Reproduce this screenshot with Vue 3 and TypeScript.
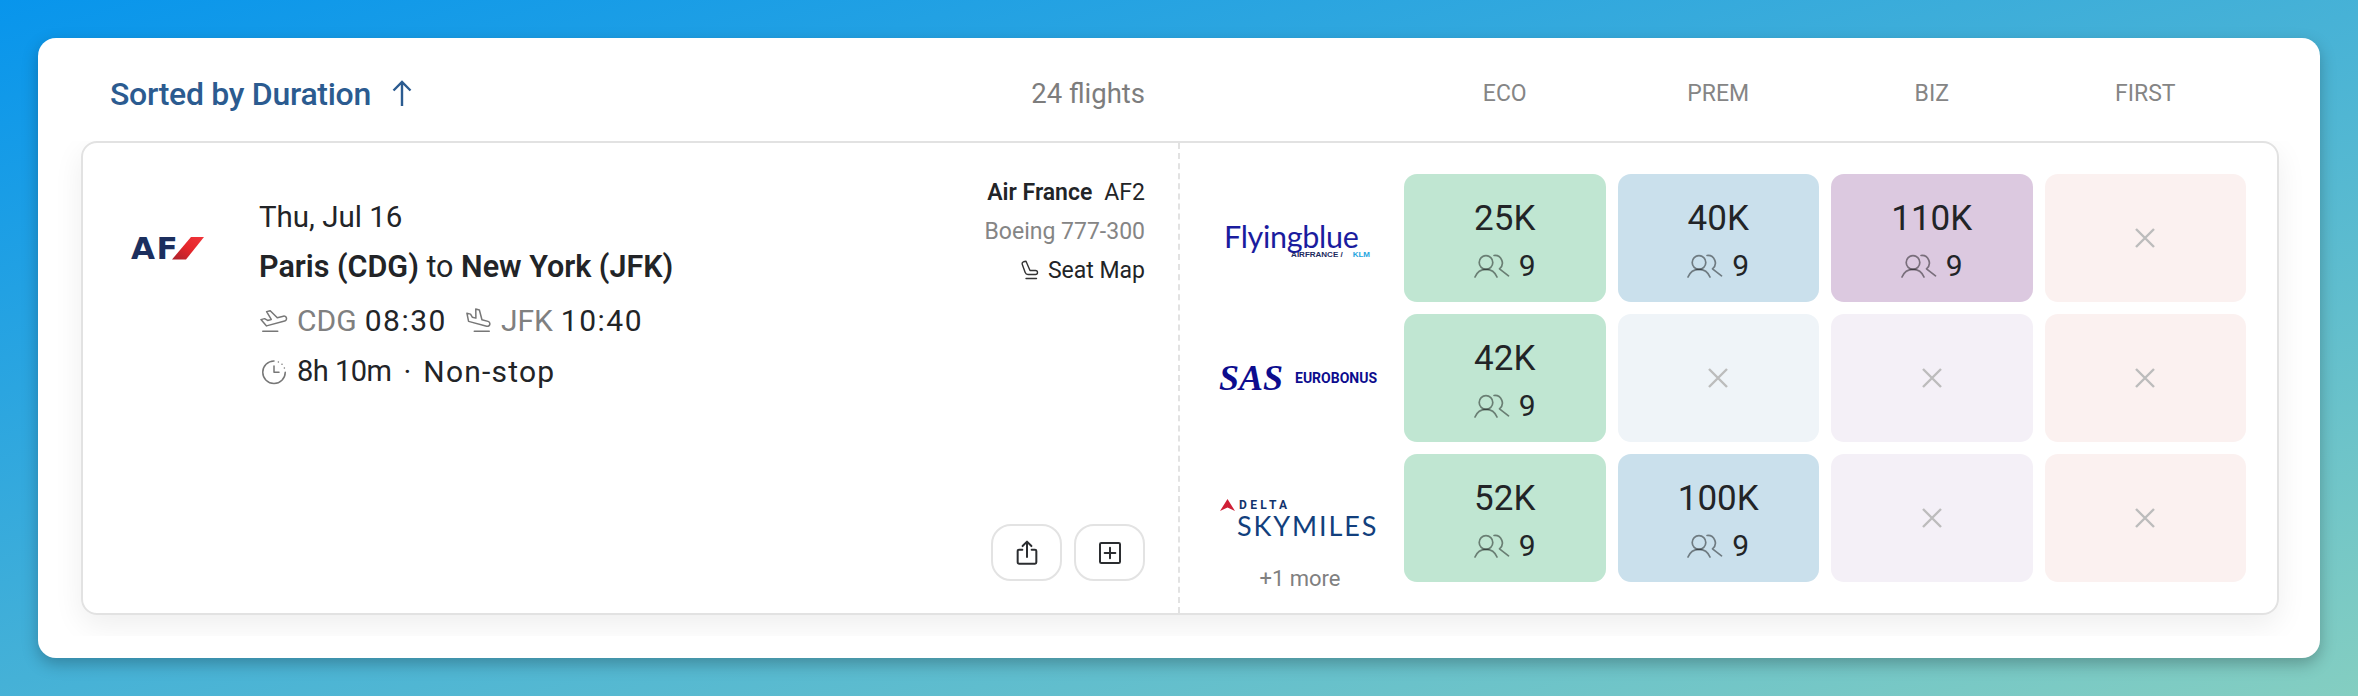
<script setup lang="ts">
type Tone = 'eco' | 'prem' | 'biz' | 'first'

interface Fare {
  tone: Tone
  miles?: string
  seats?: number
}

interface Program {
  id: 'flyingblue' | 'sas' | 'delta'
  fares: Fare[]
}

const cabins = ['ECO', 'PREM', 'BIZ', 'FIRST']

const programs: Program[] = [
  {
    id: 'flyingblue',
    fares: [
      { tone: 'eco', miles: '25K', seats: 9 },
      { tone: 'prem', miles: '40K', seats: 9 },
      { tone: 'biz', miles: '110K', seats: 9 },
      { tone: 'first' },
    ],
  },
  {
    id: 'sas',
    fares: [
      { tone: 'eco', miles: '42K', seats: 9 },
      { tone: 'prem' },
      { tone: 'biz' },
      { tone: 'first' },
    ],
  },
  {
    id: 'delta',
    fares: [
      { tone: 'eco', miles: '52K', seats: 9 },
      { tone: 'prem', miles: '100K', seats: 9 },
      { tone: 'biz' },
      { tone: 'first' },
    ],
  },
]
</script>

<template>
  <div class="page">
    <section class="panel">
      <header class="head">
        <div class="head-left">
          <button class="sort" type="button">
            <span>Sorted by Duration</span>
            <svg class="sort-arrow" width="24" height="28" viewBox="0 0 24 28" fill="none">
              <path d="M12 26V2M3.5 10.5 12 2l8.500 8.500" />
            </svg>
          </button>
          <span class="count">24 flights</span>
        </div>
        <div class="cabins">
          <span v-for="cabin in cabins" :key="cabin">{{ cabin }}</span>
        </div>
      </header>

      <div class="clip">
        <article class="card">
          <div class="info">
            <div class="airline-logo">
              <span class="af-text">AF</span>
              <svg width="32" height="23" viewBox="0 0 32 23">
                <defs>
                  <linearGradient id="af-red" x1="0" y1="1" x2="1" y2="0">
                    <stop offset="0" stop-color="#a9222c" />
                    <stop offset="0.5" stop-color="#e5262b" />
                    <stop offset="1" stop-color="#f0353a" />
                  </linearGradient>
                </defs>
                <polygon points="19,0 32,0 14,22.500 0,22.500" fill="url(#af-red)" />
              </svg>
            </div>

            <div class="trip">
              <div class="date">Thu, Jul 16</div>
              <div class="route"><b>Paris (CDG)</b> to <b>New York (JFK)</b></div>
              <div class="times">
                <svg class="ico" width="30" height="30" viewBox="0 0 24 24" fill="none">
                  <path d="M14.639 10.258l4.83-1.294a2 2 0 1 1 1.035 3.863l-14.489 3.883-4.45-5.020 2.897-.776 2.450 1.414 2.897-.776-3.743-6.244 2.898-.777 5.675 5.727" />
                  <path d="M3 21h12" />
                </svg>
                <span class="muted">CDG</span>
                <span class="clock">08:30</span>
                <svg class="ico ico-gap" width="30" height="30" viewBox="0 0 24 24" fill="none">
                  <path d="M15.157 11.810l4.830 1.295a2 2 0 1 1-1.036 3.863l-14.489-3.882-1.345-6.572 2.898.776 1.414 2.450 2.898.776-.120-7.279 2.898.777 2.052 7.797" />
                  <path d="M9 21h12" />
                </svg>
                <span class="muted">JFK</span>
                <span class="clock">10:40</span>
              </div>
              <div class="times times--last">
                <svg class="ico" width="30" height="30" viewBox="0 0 24 24" fill="none">
                  <path d="M21 13a9 9 0 1 1-9-9" />
                  <path d="M12 8v5h4" />
                  <path d="M15.500 4.700v.01M18.400 6.600v.01M20.300 9.600v.01" />
                </svg>
                <span class="length">8h 10m</span>
                <span class="dot">·</span>
                <span class="stops">Non-stop</span>
              </div>
            </div>

            <div class="side">
              <div class="flight"><b>Air France</b><span>AF2</span></div>
              <div class="plane">Boeing 777-300</div>
              <div class="seatmap">
                <svg width="20" height="20" viewBox="0 0 20 20" fill="none">
                  <path d="M3.500 1.800 6 1.200 10 10.500h5.500a2 2 0 0 1 0 4H8a3 3 0 0 1-2.800-2L2.300 4.500a2 2 0 0 1 1.200-2.700z" />
                  <path d="M6 18.500h10.500" />
                </svg>
                <span>Seat Map</span>
              </div>
              <div class="actions">
                <button class="action" type="button" aria-label="Share">
                  <svg width="32" height="32" viewBox="0 0 24 24" fill="none">
                    <path d="M8.500 9.500H6a1 1 0 0 0-1 1V19a1 1 0 0 0 1 1h12a1 1 0 0 0 1-1v-8.500a1 1 0 0 0-1-1h-2.500" />
                    <path d="M12 15V3.500M8.700 6.800 12 3.500l3.300 3.300" />
                  </svg>
                </button>
                <button class="action" type="button" aria-label="Add">
                  <svg width="32" height="32" viewBox="0 0 24 24" fill="none">
                    <rect x="4.500" y="4.500" width="15" height="15" rx="1" />
                    <path d="M12 8v8M8 12h8" />
                  </svg>
                </button>
              </div>
            </div>
          </div>

          <div class="fares">
            <template v-for="program in programs" :key="program.id">
              <div class="program">
                <div v-if="program.id === 'flyingblue'" class="fb">
                  <div class="fb-name">Flyingblue</div>
                  <div class="fb-sub"><span class="fb-af">AIRFRANCE /</span><span class="fb-klm">KLM</span></div>
                </div>
                <div v-else-if="program.id === 'sas'" class="sas">
                  <span class="sas-name">SAS</span>
                  <span class="sas-sub">EUROBONUS</span>
                </div>
                <template v-else>
                  <div class="delta">
                    <div class="delta-top">
                      <svg width="15" height="12" viewBox="0 0 15 12">
                        <polygon points="7.500,0 15,12 7.500,8.500 0,12" fill="#cf1f36" />
                      </svg>
                      <span>DELTA</span>
                    </div>
                    <div class="delta-name">SKYMILES</div>
                  </div>
                  <div class="more">+1 more</div>
                </template>
              </div>

              <div v-for="fare in program.fares" :key="fare.tone" :class="['fare', `fare--${fare.tone}`, { 'fare--none': !fare.miles }]">
                <template v-if="fare.miles">
                  <div class="miles">{{ fare.miles }}</div>
                  <div class="seats">
                    <svg width="36" height="24" viewBox="0 0 36 24" fill="none">
                      <circle cx="12" cy="8.500" r="6.800" />
                      <path d="M1 23c2-5 6-7.700 11-7.700S21 18 23 23" />
                      <path d="M20 1.500a7.500 7.500 0 0 1 5.500 13.300l9 7" />
                    </svg>
                    <span>{{ fare.seats }}</span>
                  </div>
                </template>
                <svg v-else width="20" height="20" viewBox="0 0 20 20" fill="none">
                  <path d="M1 1l18 18M19 1 1 19" />
                </svg>
              </div>
            </template>
          </div>
        </article>
      </div>
    </section>
  </div>
</template>

<style>
html,
body {
  margin: 0;
}
</style>

<style scoped>
.page {
  box-sizing: border-box;
  width: 2358px;
  height: 696px;
  padding: 38px 38px 38px;
  background: linear-gradient(to bottom right, #0895ec, #84cec1);
  font-family: Roboto, 'Liberation Sans', sans-serif;
  color: #222427;
}

.panel {
  box-sizing: border-box;
  height: 620px;
  border-radius: 18px;
  background: #fff;
  box-shadow: 0 6px 16px rgba(0, 0, 0, 0.25);
}

.head {
  display: flex;
  align-items: center;
  box-sizing: border-box;
  height: 103px;
  padding: 8px 74px 0 72px;
}

.head-left {
  display: flex;
  align-items: center;
  justify-content: space-between;
  width: 1035px;
  margin-right: 259px;
}

.sort {
  display: flex;
  align-items: center;
  gap: 19px;
  padding: 0;
  border: 0;
  background: none;
  font: 500 32px Roboto, sans-serif;
  letter-spacing: -0.3px;
  color: #2b5b90;
}

.sort-arrow path {
  stroke: #2b5b90;
  stroke-width: 2.400;
}

.count {
  font-size: 27.500px;
  color: #7d7d7d;
}

.cabins {
  display: grid;
  flex: 1;
  grid-template-columns: repeat(4, 1fr);
  gap: 12px;
  font-size: 23px;
  text-align: center;
  color: #858585;
}

.clip {
  padding: 0 41px 21px 43px;
  overflow: hidden;
}

.card {
  display: grid;
  grid-template-columns: 1095px 1fr;
  box-sizing: border-box;
  height: 474px;
  border: 2px solid #e2e2e2;
  border-radius: 16px;
  box-shadow: 0 10px 30px rgba(0, 0, 0, 0.07);
}

.info {
  display: flex;
  box-sizing: border-box;
  padding: 0 33px 32px 48px;
}

.airline-logo {
  display: flex;
  align-items: center;
  flex: none;
  width: 80px;
  height: 24px;
  margin: 93px 48px 0 0;
}

.af-text {
  margin-right: -7px;
  font: 700 31px/24px 'DejaVu Sans', sans-serif;
  letter-spacing: 1.500px;
  color: #1c2f5e;
}

.trip {
  flex: 1;
  padding-top: 53px;
  font-size: 29.500px;
}

.date {
  height: 42px;
  line-height: 42px;
}

.route {
  height: 54px;
  margin-top: 2px;
  font-size: 30.500px;
  line-height: 54px;
}

.route b {
  font-weight: 600;
}

.times {
  display: flex;
  align-items: center;
  height: 52px;
  gap: 8px;
  font-size: 30px;
}

.times--last {
  margin-top: -1px;
}

.ico path {
  stroke: #777;
  stroke-width: 1.200;
  stroke-linecap: round;
  stroke-linejoin: round;
}

.ico-gap {
  margin-left: 8px;
}

.muted {
  color: #808080;
}

.clock {
  letter-spacing: 1.500px;
}

.length {
  font-size: 29px;
  letter-spacing: -0.5px;
}

.dot {
  margin: 0 4px;
}

.stops {
  letter-spacing: 1.200px;
}

.side {
  display: flex;
  flex-direction: column;
  align-items: flex-end;
  padding-top: 36px;
  font-size: 23px;
}

.flight {
  display: flex;
  gap: 12px;
  height: 28px;
  line-height: 28px;
}

.flight b {
  font-weight: 600;
}

.plane {
  height: 28px;
  margin-top: 11px;
  line-height: 28px;
  color: #858585;
}

.seatmap {
  display: flex;
  align-items: center;
  gap: 8px;
  height: 28px;
  margin-top: 10px;
}

.seatmap path {
  stroke: #333;
  stroke-width: 1.400;
  stroke-linejoin: round;
  stroke-linecap: round;
}

.actions {
  display: flex;
  gap: 12px;
  margin-top: auto;
}

.action {
  display: flex;
  align-items: center;
  justify-content: center;
  box-sizing: border-box;
  width: 71px;
  height: 57px;
  padding: 0;
  border: 2px solid #e3e3e3;
  border-radius: 20px;
  background: #fff;
}

.action path,
.action rect {
  stroke: #2b2d30;
  stroke-width: 1.500;
  stroke-linecap: round;
  stroke-linejoin: round;
}

.fares {
  display: grid;
  grid-template-columns: 212px repeat(4, 1fr);
  grid-auto-rows: 128px;
  gap: 12px 12px;
  padding: 31px 31px 0 0;
  border-left: 2px dashed #e2e2e2;
}

.fares > .program {
  margin-right: -12px;
  padding-left: 12px;
}

.program {
  display: flex;
  flex-direction: column;
  align-items: center;
  justify-content: center;
}

.fb {
  width: 132px;
  margin: 4px 16px 0 0;
}

.fb-name {
  font: 400 30.500px/28px Lato, sans-serif;
  letter-spacing: -0.3px;
  color: #1a1c9e;
  white-space: nowrap;
}

.fb-sub {
  display: flex;
  justify-content: flex-end;
  gap: 10px;
  margin: 0 -14px 0 0;
  font: 700 8px/9px 'Liberation Sans', sans-serif;
}

.fb-af {
  color: #1c2a5e;
}

.fb-klm {
  color: #1ea5e0;
}

.sas {
  display: flex;
  align-items: center;
  gap: 12px;
}

.sas-name {
  font: italic 700 36px/30px 'Liberation Serif', serif;
  color: #0c0c8e;
}

.sas-sub {
  font: 700 14px/16px Roboto, sans-serif;
  color: #0c0c8e;
}

.delta {
  width: 156px;
  margin-top: 21px;
}

.delta-top {
  display: flex;
  align-items: center;
  gap: 4px;
  font: 700 12px/14px Roboto, sans-serif;
  letter-spacing: 3.400px;
  color: #11336c;
}

.delta-name {
  margin-left: 17px;
  font: 400 27px/28px Lato, sans-serif;
  letter-spacing: 1.900px;
  color: #123f7d;
  white-space: nowrap;
}

.more {
  margin: 27px 0 -32px 4px;
  font-size: 22px;
  line-height: 24px;
  color: #808080;
}

.fare {
  display: flex;
  flex-direction: column;
  align-items: center;
  justify-content: center;
  box-sizing: border-box;
  padding-top: 4px;
  border-radius: 13px;
}

.fare--none {
  padding-top: 0;
}

.fare--eco {
  background: #c0e6d2;
}

.fare--prem {
  background: #cae0ec;
}

.fare--biz {
  background: #dcc9e0;
}

.fare--first {
  background: #fbf1f0;
}

.fare--prem.fare--none {
  background: #eff4f8;
}

.fare--biz.fare--none {
  background: #f4f0f7;
}

.fare--none path {
  stroke: #bcbcbc;
  stroke-width: 2.400;
}

.miles {
  font-size: 35px;
  line-height: 44px;
}

.seats {
  display: flex;
  align-items: center;
  gap: 9px;
  margin-top: 7px;
  font-size: 30px;
  line-height: 36px;
}

.seats circle,
.seats path {
  stroke: rgba(0, 0, 0, 0.45);
  stroke-width: 1.700;
  stroke-linecap: round;
  stroke-linejoin: round;
}
</style>
